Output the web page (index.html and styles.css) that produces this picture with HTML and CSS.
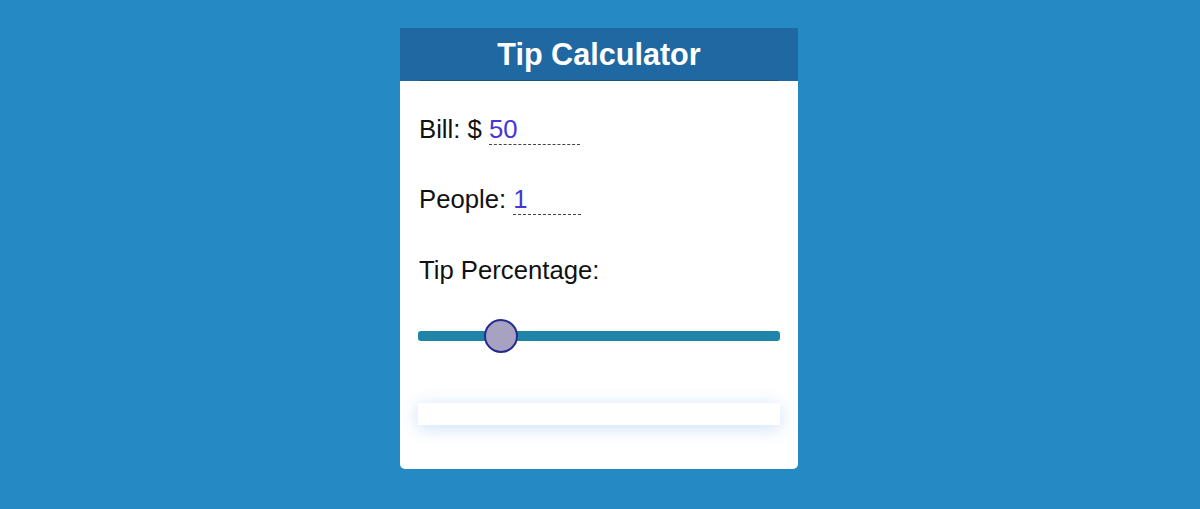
FILE: index.html
```html
<!DOCTYPE html>
<html>
<head>
<meta charset="utf-8">
<title>Tip Calculator</title>
<link rel="stylesheet" href="styles.css">
</head>
<body>
<main class="card">
  <header class="card-header">
    <h1 class="title">Tip Calculator</h1>
  </header>
  <section class="card-body">
    <div class="row">
      <label class="field">Bill: $ <input class="entry entry-bill" type="text" value="50"></label>
    </div>
    <div class="row">
      <label class="field">People: <input class="entry entry-people" type="text" value="1"></label>
    </div>
    <div class="row">
      <span class="field">Tip Percentage:</span>
    </div>
    <div class="slider-row">
      <input class="slider" type="range" min="0" max="100" value="20">
    </div>
    <div class="result"></div>
  </section>
</main>
</body>
</html>
```

FILE: styles.css
```css
* { box-sizing: border-box; }
html, body { margin: 0; padding: 0; }
body {
  background: #2589c4;
  font-family: "Liberation Sans", Arial, sans-serif;
  height: 509px;
  overflow: hidden;
}
.card {
  width: 398px;
  margin: 28px 0 0 calc(50% - 200px);
  background: #fff;
  border-radius: 0 0 5px 5px;
  padding-bottom: 44px;
}
.card-header {
  background: #1f68a1;
  height: 53px;
  padding: 0 20px;
  display: flex;
}
.title {
  margin: 0;
  flex: 1;
  color: #fff;
  font-size: 30.6px;
  font-weight: bold;
  text-align: center;
  line-height: 52px;
  border-bottom: 1px solid #1a4f78;
}
.card-body {
  padding: 0 18px 0 18px;
}
.row {
  height: 70px;
  display: flex;
  align-items: center;
  padding-top: 28px;
}
.field {
  font-size: 25.7px;
  color: #111;
  padding-left: 1px;
}
.entry {
  font: inherit;
  color: #4435d6;
  border: none;
  border-bottom: 1px dashed #444;
  outline: none;
  padding: 0;
  margin: 0;
  background: transparent;
  height: 30px;
}
.entry-bill { width: 91px; }
.entry-people { width: 68px; }
.slider-row {
  height: 70px;
  display: flex;
  align-items: center;
  padding-top: 20px;
}
.slider {
  -webkit-appearance: none;
  appearance: none;
  width: 362px;
  height: 10px;
  margin: 0;
  background: #1f85a8;
  border-radius: 3px;
  outline: none;
}
.slider::-webkit-slider-thumb {
  -webkit-appearance: none;
  appearance: none;
  width: 34px;
  height: 34px;
  border-radius: 50%;
  background: #a8a2c2;
  border: 2px solid #262a8f;
}
.result {
  margin-top: 42px;
  height: 22px;
  width: 362px;
  background: #fff;
  box-shadow: 0 3px 18px rgba(70, 140, 230, 0.28);
}
```
